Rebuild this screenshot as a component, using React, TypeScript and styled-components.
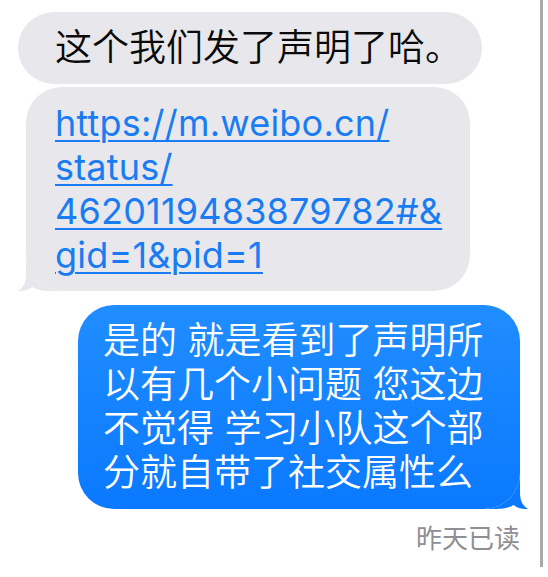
import React from "react";
import styled, { createGlobalStyle } from "styled-components";

const GlobalStyle = createGlobalStyle`
  html, body {
    margin: 0;
    padding: 0;
    background: #ffffff;
  }
  body {
    font-family: "Inter", "Noto Sans CJK SC", sans-serif;
  }
`;

const Page = styled.div`
  width: 548px;
  height: 577px;
  display: flex;
  flex-direction: row;
  overflow: hidden;
  background: #ffffff;
`;

const Thread = styled.div`
  width: 540px;
  display: flex;
  flex-direction: column;
  padding-top: 12px;
  box-sizing: border-box;
`;

const EdgeLine = styled.div`
  width: 3px;
  height: 567px;
  background: #a9a9a9;
`;

const Bubble = styled.div<{ $sent?: boolean; $w: number; $ml?: number; $mt?: number; $pl: number }>`
  position: relative;
  box-sizing: border-box;
  width: ${(p) => p.$w}px;
  margin-top: ${(p) => p.$mt ?? 0}px;
  margin-left: ${(p) => p.$ml ?? 0}px;
  align-self: ${(p) => (p.$sent ? "flex-end" : "flex-start")};
  margin-right: ${(p) => (p.$sent ? 20 : 0)}px;
  padding: 14px 10px 14px ${(p) => p.$pl}px;
  border-radius: 36px;
  background: ${(p) =>
    p.$sent ? "linear-gradient(180deg, #208dff 0%, #0a79ff 100%)" : "#e8e8ec"};
  color: ${(p) => (p.$sent ? "#ffffff" : "#0a0a0a")};
  font-family: "Inter", "Noto Sans CJK SC", sans-serif;
  font-size: 37px;
  font-weight: 350;
  line-height: 44px;
  white-space: pre-line;
`;

const LinkText = styled.a`
  display: block;
  color: #1a7cf2;
  text-decoration: underline;
  text-decoration-thickness: 2px;
  text-underline-offset: 4px;
  font-family: "Inter", sans-serif;
  font-size: 36px;
  font-weight: 400;
  letter-spacing: 0.2px;
`;

const Tail = styled.svg<{ $right?: boolean }>`
  position: absolute;
  bottom: 0;
  width: 44px;
  height: 36px;
  ${(p) => (p.$right ? "right: -8px; transform: scaleX(-1);" : "left: -8px;")}
`;

const Receipt = styled.div`
  align-self: flex-end;
  margin-right: 20px;
  margin-top: 13px;
  font-family: "Noto Sans CJK SC", sans-serif;
  font-size: 26px;
  line-height: 30px;
  color: #8e8e93;
`;

const TailShape = ({ fill, right }: { fill: string; right?: boolean }) => (
  <Tail $right={right} viewBox="0 0 44 36">
    <path
      d="M8 0 L8 20 C8 28 5 33 0 36 C6 36.4 11 35 14.5 32 C19 35 25 36 32 36 L44 36 A36 36 0 0 1 8 0 Z"
      fill={fill}
    />
  </Tail>
);

export default function App() {
  return (
    <>
      <GlobalStyle />
      <Page>
        <Thread>
          <Bubble $w={464} $ml={18} $pl={37}>
            这个我们发了声明了哈。
          </Bubble>
          <Bubble $w={444} $ml={26} $mt={3} $pl={29}>
            <LinkText href="#">
              {"https://m.weibo.cn/\nstatus/\n4620119483879782#&\ngid=1&pid=1"}
            </LinkText>
            <TailShape fill="#e8e8ec" />
          </Bubble>
          <Bubble $sent $w={442} $mt={14} $pl={25}>
            {"是的 就是看到了声明所\n以有几个小问题 您这边\n不觉得 学习小队这个部\n分就自带了社交属性么"}
            <TailShape fill="#0a79ff" right />
          </Bubble>
          <Receipt>昨天已读</Receipt>
        </Thread>
        <EdgeLine />
      </Page>
    </>
  );
}
